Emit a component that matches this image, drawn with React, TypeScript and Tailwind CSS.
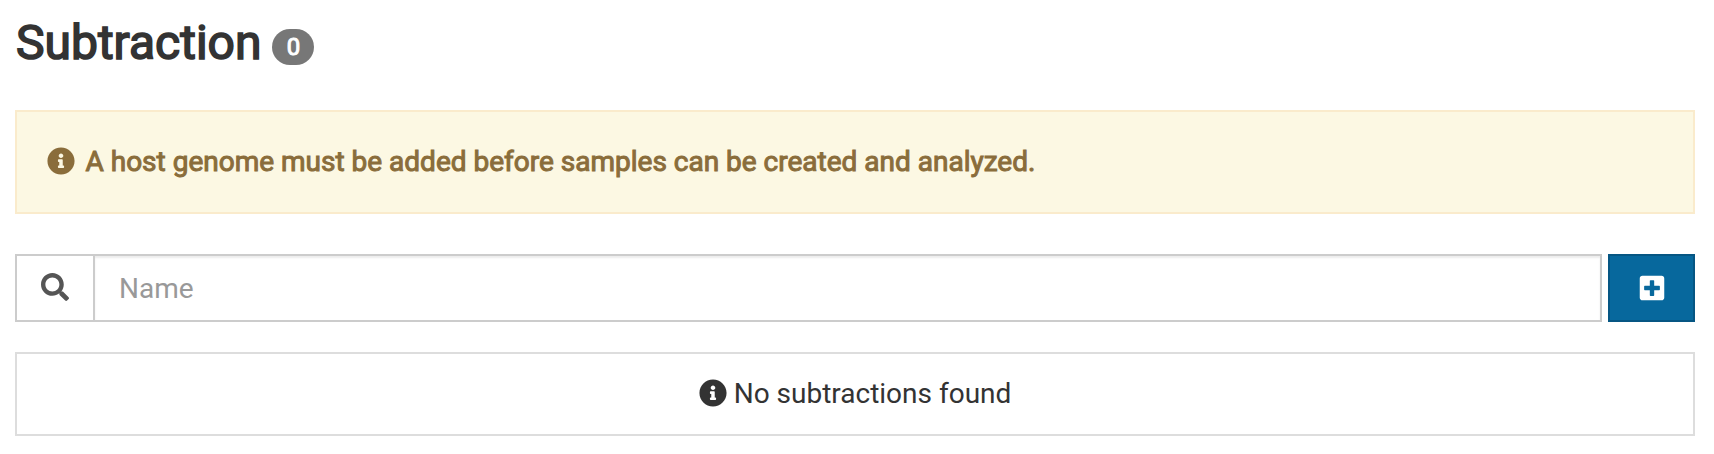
import { FaInfoCircle, FaSearch, FaPlusSquare } from "react-icons/fa";

export default function App() {
  return (
    <main className="flex h-[454px] flex-col bg-white pr-[19px] pl-[15px] pt-[16px] font-[Roboto,sans-serif] text-[28px] leading-[40px] text-[#333333]">
      <h1 className="flex h-[54px] items-center pl-px text-[48px] leading-[54px] font-normal">
        <span className="[-webkit-text-stroke:1.6px_#333333]">Subtraction</span>
        <span className="mt-[8px] ml-[11px] flex h-9 w-[42px] items-center justify-center rounded-full bg-[#777777] text-[24px] leading-none font-normal text-white [-webkit-text-stroke:1px_#ffffff]">0</span>
      </h1>
      <section className="mt-[40px] flex h-[104px] items-center border-2 border-[#faebcc] bg-[#fcf8e3] px-[30px] text-[#8a6d3b]">
        <FaInfoCircle className="mr-[10.5px] mb-[3px] size-[28px]" />
        <span className="[-webkit-text-stroke:1px_#8a6d3b]">A host genome must be added before samples can be created and analyzed.</span>
      </section>
      <div className="mt-[40px] flex h-[68px] gap-[6px]">
        <div className="flex flex-1 border-2 border-[#cccccc]">
          <span className="flex w-[78px] items-center justify-center border-r-2 border-[#cccccc] text-[#555555]"><FaSearch className="mb-[3px] size-7" /></span>
          <input aria-label="Name" placeholder="Name" className="min-w-0 flex-1 px-6 pt-0.5 shadow-[inset_0_2px_2px_rgba(0,0,0,0.075)] outline-none placeholder:text-[#999999]" />
        </div>
        <button aria-label="Create" className="flex w-[87px] items-center justify-center border-2 border-[#065683] bg-[#07689d] text-white"><FaPlusSquare className="mb-px size-7" /></button>
      </div>
      <section className="mt-[30px] flex h-[84px] items-center justify-center border-2 border-[#dddddd]">
        <FaInfoCircle className="mr-[7px] mb-[3px] size-[28px]" />
        <span>No subtractions found</span>
      </section>
    </main>
  );
}
